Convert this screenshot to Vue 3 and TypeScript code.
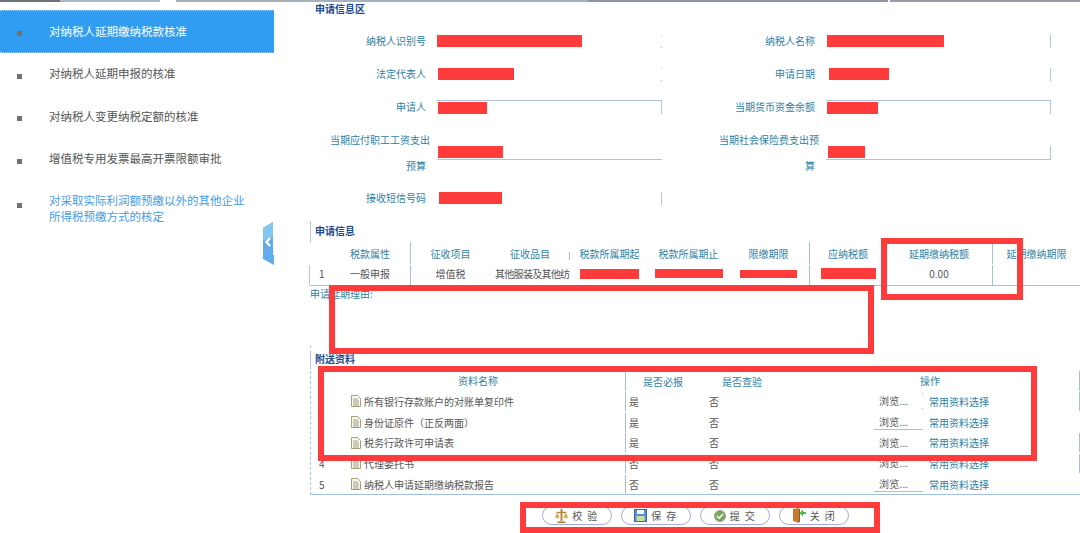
<script setup lang="ts">
interface MenuItem { text: string; cls: string }
interface FormCell { label: string; label2?: string; offset: number; width: number; cls: string }
interface DocRow { no: string; name: string; must: string; line: string; right: boolean }

const menu: MenuItem[] = [
  { text: '对纳税人延期缴纳税款核准', cls: 'active' },
  { text: '对纳税人延期申报的核准', cls: '' },
  { text: '对纳税人变更纳税定额的核准', cls: '' },
  { text: '增值税专用发票最高开票限额审批', cls: '' },
  { text: '对采取实际利润额预缴以外的其他企业所得税预缴方式的核定', cls: 'link' },
]

const form: FormCell[] = [
  { label: '纳税人识别号', offset: 0, width: 145, cls: 'dots' },
  { label: '纳税人名称', offset: 1, width: 117, cls: 'right' },
  { label: '法定代表人', offset: 1, width: 76, cls: 'dots' },
  { label: '申请日期', offset: 3, width: 60, cls: 'right' },
  { label: '申请人', offset: 1, width: 49, cls: 'top' },
  { label: '当期货币资金余额', offset: 1, width: 51, cls: 'top' },
  { label: '当期应付职工工资支出', label2: '预算', offset: 1, width: 65, cls: 'bottom' },
  { label: '当期社会保险费支出预', label2: '算', offset: 2, width: 37, cls: 'bottom right' },
  { label: '接收短信号码', offset: 2, width: 63, cls: 'right' },
]

const heads: string[] = ['', '税款属性', '征收项目', '征收品目', '税款所属期起', '税款所属期止', '限缴期限', '应纳税额', '延期缴纳税额', '延期缴纳期限']
const headCls: string[] = ['', 'sep', '', 'tick', '', '', '', 'sep-l', 'sep', '']

const docs: DocRow[] = [
  { no: '1', name: '所有银行存款账户的对账单复印件', must: '是', line: 'ticks', right: true },
  { no: '2', name: '身份证原件（正反两面）', must: '是', line: 'under', right: false },
  { no: '3', name: '税务行政许可申请表', must: '是', line: '', right: true },
  { no: '4', name: '代理委托书', must: '否', line: '', right: true },
  { no: '5', name: '纳税人申请延期缴纳税款报告', must: '否', line: 'under', right: false },
]
</script>

<template>
  <div class="page">
    <div class="strip">
      <i class="s1"></i><i class="s2"></i><i class="s3"></i><i class="s4"></i><i class="s5"></i><i class="s3b"></i><i class="s6"></i>
    </div>
    <div class="body">
      <aside class="side">
        <div v-for="m in menu" :key="m.text" class="item" :class="m.cls">
          <span class="bullet"></span>
          <span class="item-text">{{ m.text }}</span>
        </div>
        <svg class="collapse" width="11" height="44" viewBox="0 0 11 44">
          <polygon points="0,7 10,1 10,34 11,34 11,44 0,38" fill="#62ade9" />
          <polygon points="0,7 10,1 10,16 0,20" fill="#82c6f2" />
          <polyline points="7,17 3.5,21 7,25" fill="none" stroke="#fff" stroke-width="2.4" />
        </svg>
      </aside>

      <main class="main">
        <h2 class="title">申请信息区</h2>
        <div class="form">
          <template v-for="c in form" :key="c.label">
            <div class="label" :class="{ tall: c.label2 }">
              <template v-if="c.label2">
                <span class="over">{{ c.label }}</span>
                <span>{{ c.label2 }}</span>
              </template>
              <template v-else>{{ c.label }}</template>
            </div>
            <div class="field" :class="c.cls">
              <span class="red" :style="{ marginLeft: c.offset + 'px', width: c.width + 'px' }"></span>
            </div>
          </template>
        </div>

        <h2 class="title t2 ruled">申请信息</h2>
        <div class="tax">
          <div class="tax-row head">
            <div v-for="(h, i) in heads" :key="i" class="cell" :class="headCls[i]">{{ h }}</div>
          </div>
          <div class="tax-row data">
            <div class="cell no">1</div>
            <div class="cell sep">一般申报</div>
            <div class="cell">增值税</div>
            <div class="cell clip">其他服装及其他纺</div>
            <div class="cell"><span class="red w59"></span></div>
            <div class="cell"><span class="red w68"></span></div>
            <div class="cell"><span class="red w57"></span></div>
            <div class="cell sep-l"><span class="red w55"></span></div>
            <div class="cell sep">0.00</div>
            <div class="cell"></div>
          </div>
        </div>
        <div class="reason">申请延期理由:</div>

        <h2 class="title t3 ruled">附送资料</h2>
        <div class="docs">
          <div class="doc-row doc-head">
            <div class="name-head">资料名称</div>
            <div class="must-head">是否必报</div>
            <div class="check-head">是否查验</div>
            <div class="op-head">操作</div>
          </div>
          <div v-for="d in docs" :key="d.no" class="doc-row">
            <div class="doc-no">{{ d.no }}</div>
            <div class="doc-name">
              <svg class="file" width="10" height="12" viewBox="0 0 10 12">
                <path d="M0.5 0.5H6.5L9.5 3.5V11.5H0.5Z" fill="#fbfaf0" stroke="#a89f78" />
                <path d="M2 4H7M2 6H8M2 8H8M2 10H8" stroke="#8a8468" stroke-width="0.8" />
              </svg>
              <span>{{ d.name }}</span>
            </div>
            <div class="doc-must">{{ d.must }}</div>
            <div class="doc-check">否</div>
            <div class="doc-op" :class="{ edge: d.right }">
              <span class="browse" :class="d.line">浏览...</span>
              <span class="pick">常用资料选择</span>
            </div>
          </div>
        </div>

        <div class="actions">
          <button class="btn" type="button">
            <svg width="13" height="15" viewBox="0 0 13 15">
              <path d="M6.5 1V13" stroke="#b08a3c" stroke-width="2" fill="none" />
              <path d="M1.5 4.5H11.5" stroke="#b08a3c" stroke-width="1.4" />
              <path d="M0 9Q2 12 4.5 9L2.2 4.5ZM8.5 9Q10.8 12 13 9L10.8 4.5Z" fill="#d8b060" />
              <path d="M2.5 13.5H10.5V15H2.5Z" fill="#a07c30" />
            </svg>
            <span>校 验</span>
          </button>
          <button class="btn" type="button">
            <svg width="13" height="13" viewBox="0 0 13 13">
              <rect x="0.5" y="0.5" width="12" height="12" fill="#5a90d0" stroke="#3a6aa8" />
              <rect x="3" y="1" width="7" height="4" fill="#f0f5fa" />
              <rect x="2.5" y="7" width="8" height="5" fill="#c4e09c" />
            </svg>
            <span>保 存</span>
          </button>
          <button class="btn" type="button">
            <svg width="12" height="12" viewBox="0 0 12 12">
              <circle cx="6" cy="6" r="5.5" fill="#78a858" stroke="#9aa090" />
              <path d="M3 6L5.2 8.2L9 4" stroke="#fff" stroke-width="1.6" fill="none" />
            </svg>
            <span>提 交</span>
          </button>
          <button class="btn" type="button">
            <svg width="14" height="15" viewBox="0 0 14 15">
              <path d="M1 1L7 0V15L1 13Z" fill="#c87a30" />
              <path d="M7 1H8V14H7Z" fill="#8a5a28" />
              <path d="M14 4H11V1.5L7.5 5L11 8.5V6H14Z" fill="#3cc04c" />
            </svg>
            <span>关 闭</span>
          </button>
        </div>
      </main>
    </div>

    <div class="mark m-delay"></div>
    <div class="mark m-reason"></div>
    <div class="mark m-docs"></div>
    <div class="mark m-actions"></div>
  </div>
</template>

<style scoped>
.page {
  position: relative;
  width: 1080px;
  height: 533px;
  overflow: hidden;
  background: #fff;
  color: #555;
  font-family: "Noto Sans CJK SC", "Liberation Sans", sans-serif;
  font-size: 10px;
}
.strip { display: flex; height: 2px; }
.strip i { display: block; height: 2px; }
.s1 { width: 60px; background: #6c7278; }
.s2 { width: 100px; background: #a9bac6; }
.s3 { width: 16px; background: #fff; }
.s4 { width: 412px; background: #a5b0b8; }
.s5 { width: 300px; background: #8e969c; }
.s3b { width: 2px; background: #fff; }
.s6 { flex: 1; background: #9c9aa6; }

.body { display: flex; height: 531px; }

.side { position: relative; width: 274px; flex: none; padding-top: 8px; box-sizing: border-box; }
.item {
  display: flex;
  align-items: center;
  height: 42.5px;
  padding-left: 17px;
  box-sizing: border-box;
  font-size: 11.5px;
  line-height: 16px;
  color: #555;
}
.item.active {
  height: 43px;
  background: #309df2;
  color: #fff;
  border-top: 1px dotted #a8d0f0;
  border-bottom: 1px dotted #a8d0f0;
}
.item.link { height: 58px; color: #3f9be8; }
.bullet { width: 5px; height: 5px; flex: none; background: #707070; margin-top: 4px; }
.item.link .bullet { margin-top: 0; margin-bottom: 8px; }
.item-text { margin-left: 27px; width: 200px; margin-bottom: 2px; }
.item.link .item-text { margin-bottom: 4px; }
.collapse { position: absolute; right: 0; top: 219px; }

.main { flex: 1; padding-left: 36px; min-width: 0; }
.title { margin: 0; padding-left: 5px; font-size: 10px; font-weight: 700; line-height: 14px; color: #1f4a8a; }
.ruled { border-left: 1px solid #a8c4e8; padding-left: 4px; }
.t2 { margin-top: 6.5px; height: 21px; line-height: 19px; box-sizing: border-box; }
.t3 { margin-top: 0; height: 18px; line-height: 15px; box-sizing: border-box; }

.form {
  display: grid;
  grid-template-columns: 127px 225px 164px 225px;
  grid-template-rows: 33px 33px 33px 58px 33px;
  margin-top: 8.5px;
  align-items: center;
  color: #2f7f9f;
}
.label { padding-right: 11px; text-align: right; line-height: 14px; }
.label.tall { display: flex; flex-direction: column; line-height: 26px; white-space: nowrap; align-items: flex-end; }
.over { margin-right: -4px; }
.field { height: 13px; display: flex; align-items: center; border: 0 solid #b0c4d8; }
.field.right { border-right-width: 1px; }
.field.top { border-top-width: 1px; border-right-width: 1px; }
.field.bottom { border-bottom-width: 1px; }
.field.dots { background: linear-gradient(#b0c4d8, #b0c4d8) right top / 1px 1px no-repeat, linear-gradient(#b0c4d8, #b0c4d8) right bottom / 1px 1px no-repeat; }
.red { display: block; height: 12px; background: #ff3b3b; flex: none; }
.w59 { width: 59px; height: 10px; }
.w68 { width: 68px; height: 9px; }
.w57 { width: 57px; height: 8px; }
.w55 { width: 55px; height: 11px; }

.tax { border-bottom: 1px solid #a8c0dc; }
.tax-row { display: grid; grid-template-columns: 20px 81px 79px 80px 79px 79px 81px 77px 107px 87px; }
.tax-row.head { height: 22px; margin-bottom: 1px; color: #2f7f9f; }
.tax-row.data { height: 20px; margin-left: -1px; border-left: 1px solid #a8c4e8; }
.cell { display: flex; align-items: center; justify-content: center; white-space: nowrap; min-width: 0; position: relative; }
.data .cell { padding-bottom: 3px; box-sizing: border-box; }
.cell.no { justify-content: flex-start; padding-left: 9px; }
.cell.clip { justify-content: flex-start; padding-left: 5px; letter-spacing: -0.7px; }
.sep { border-right: 1px solid #a8c0dc; }
.tick::after { content: ""; position: absolute; right: 0; top: 10px; height: 8px; width: 1px; background: #a8c0dc; }
.sep-l { border-left: 1px solid #a8c0dc; }

.reason { height: 65px; line-height: 15px; color: #2f7f9f; position: relative; }
.reason::after { content: ""; position: absolute; left: 0; bottom: 3px; width: 1px; height: 2px; background: #a8c4e8; }

.docs { border-bottom: 1px solid #a0c0e4; border-left: 1px dashed #a8c4e8; margin-top: 2px; }
.doc-row { display: grid; grid-template-columns: 40px 275px 80px 72px 1fr; height: 20.7px; align-items: center; }
.doc-head { height: 20px; color: #2f7f9f; text-align: center; }
.name-head { grid-column: 1 / 3; padding-left: 20px; height: 100%; line-height: 20px; border-right: 1px solid #a8c0dc; }
.must-head { padding-right: 6px; }
.op-head { padding-right: 0; padding-left: 3px; height: 100%; line-height: 20px; border-right: 1px solid #a8c0dc; }
.doc-no { padding-left: 8px; }
.doc-name { display: flex; align-items: center; height: 19px; border-right: 1px solid #a8c0dc; box-sizing: border-box; white-space: nowrap; }
.file { flex: none; margin-right: 3px; margin-left: 0; }
.doc-must { padding-left: 3px; }
.doc-check { padding-left: 3px; }
.doc-op { display: flex; align-items: center; height: 19px; padding-left: 96px; box-sizing: border-box; }
.doc-op.edge { border-right: 1px solid #a8c0dc; }
.browse { width: 49px; height: 16px; line-height: 15px; padding-left: 5px; box-sizing: border-box; flex: none; margin-right: 6px; letter-spacing: 0.2px; }
.browse.under { border-bottom: 1px solid #a8c0d4; }
.browse.ticks { background: linear-gradient(#a8c0d4, #a8c0d4) right top / 1px 1px no-repeat, linear-gradient(#a8c0d4, #a8c0d4) right bottom / 1px 1px no-repeat; }
.pick { color: #2f7f9f; white-space: nowrap; }

.actions { display: flex; margin-top: 11px; margin-left: 232px; gap: 9px; }
.btn {
  display: flex;
  align-items: center;
  justify-content: center;
  gap: 4px;
  width: 70px;
  height: 19px;
  padding: 0;
  border: 1px solid #a8a8e0;
  border-radius: 10px;
  background: #fff;
  color: #555;
  font: 10px "Noto Sans CJK SC", "Liberation Sans", sans-serif;
  letter-spacing: 1.5px;
  white-space: pre;
}

.mark { position: absolute; border: 6px solid #ff3b3b; box-sizing: border-box; pointer-events: none; }
.m-delay { left: 881px; top: 238px; width: 142px; height: 62px; }
.m-reason { left: 329px; top: 285px; width: 545px; height: 69px; }
.m-docs { left: 318px; top: 366px; width: 719px; height: 95px; }
.m-actions { left: 520px; top: 502px; width: 360px; height: 31px; }
</style>
